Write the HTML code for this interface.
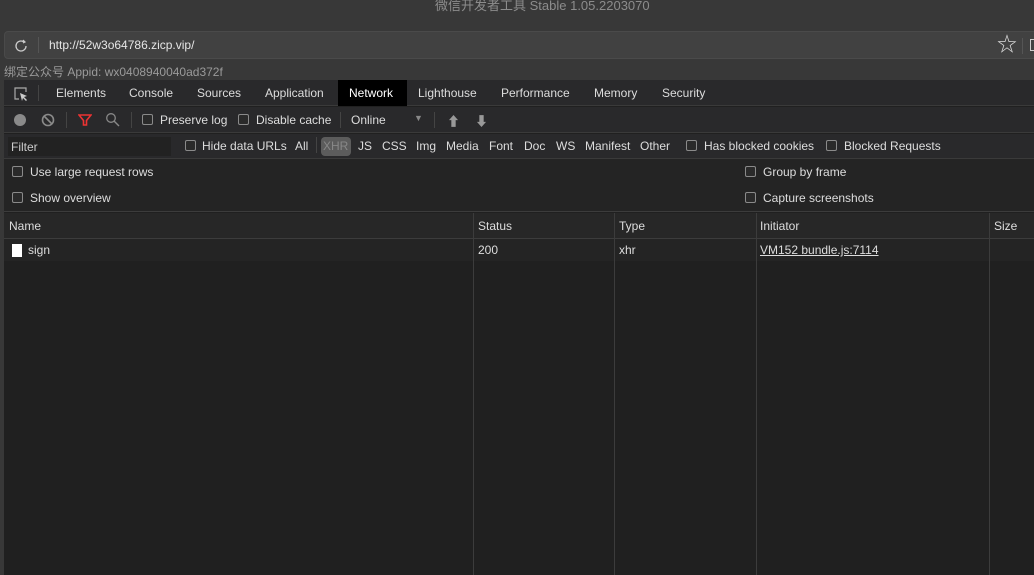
<!DOCTYPE html><html><head><meta charset="utf-8"><style>
*{margin:0;padding:0;box-sizing:border-box}
body{width:1034px;height:575px;overflow:hidden;background:#383838;font-family:"Liberation Sans","Noto Sans CJK SC",sans-serif;font-size:12px;color:#ddd;position:relative}
.a{position:absolute;white-space:nowrap}
.cb{position:absolute;width:11px;height:11px;border:1px solid #8a8a8a;border-radius:2px;background:#2a2a2a}
.vl{position:absolute;width:1px;background:#3c3c3c}
</style></head><body>
<div class="a" style="left:435px;top:-5px;font-size:13px;color:#8c8c8c">微信开发者工具 Stable 1.05.2203070</div>
<div class="a" style="left:4px;top:31px;width:1040px;height:28px;background:#414141;border:1px solid #4a4a4a;border-radius:4px"></div>
<svg class="a" style="left:13px;top:38px" width="16" height="16" viewBox="0 0 16 16"><path d="M13 8a5 5 0 1 1-2-4" fill="none" stroke="#ccc" stroke-width="1.3"/><path d="M10 2l2 2-2 1" fill="none" stroke="#ccc" stroke-width="1.2"/></svg>
<div class="a" style="left:38px;top:37px;width:1px;height:16px;background:#555"></div>
<div class="a" style="left:49px;top:38px;color:#e6e6e6">http://52w3o64786.zicp.vip/</div>
<div class="a" style="left:997px;top:35px;font-size:20px;color:#ddd;line-height:20px">☆</div>
<div class="a" style="left:1022px;top:38px;width:1px;height:16px;background:#555"></div>
<div class="a" style="left:1030px;top:39px;width:8px;height:12px;border:1px solid #ccc"></div>
<div class="a" style="left:4px;top:63px;font-size:12px;color:#9a9a9a">绑定公众号 Appid: wx0408940040ad372f</div>
<div class="a" style="left:4px;top:80px;width:1030px;height:495px;background:#202020"></div>
<div class="a" style="left:4px;top:80px;width:1030px;height:26px;background:#29292b;border-bottom:1px solid #3a3a3a"></div>
<svg class="a" style="left:13px;top:86px" width="16" height="16" viewBox="0 0 16 16"><path d="M6 13H2V2h11v4" fill="none" stroke="#aaa" stroke-width="1.2"/><path d="M7 7l7 3-3 1 3 3-1 1-3-3-1 3z" fill="#ccc"/></svg>
<div class="a" style="left:38px;top:85px;width:1px;height:16px;background:#444"></div>
<div class="a" style="left:338px;top:80px;width:69px;height:26px;background:#000"></div>
<div class="a" style="left:56px;top:86px">Elements</div><div class="a" style="left:129px;top:86px">Console</div><div class="a" style="left:197px;top:86px">Sources</div><div class="a" style="left:265px;top:86px">Application</div><div class="a" style="left:349px;top:86px;color:#fff">Network</div><div class="a" style="left:418px;top:86px">Lighthouse</div><div class="a" style="left:501px;top:86px">Performance</div><div class="a" style="left:594px;top:86px">Memory</div><div class="a" style="left:662px;top:86px">Security</div>
<div class="a" style="left:4px;top:107px;width:1030px;height:26px;background:#29292b;border-bottom:1px solid #3a3a3a"></div>
<div class="a" style="left:14px;top:114px;width:12px;height:12px;border-radius:50%;background:#8a8a8a"></div>
<svg class="a" style="left:41px;top:113px" width="14" height="14"><circle cx="7" cy="7" r="5.5" fill="none" stroke="#8a8a8a" stroke-width="1.6"/><path d="M3 3l8 8" stroke="#8a8a8a" stroke-width="1.6"/></svg>
<div class="a" style="left:66px;top:112px;width:1px;height:16px;background:#444"></div>
<svg class="a" style="left:78px;top:113px" width="14" height="14"><path d="M1 2h12L8.5 7.5V12h-3V7.5z" fill="none" stroke="#e33" stroke-width="1.6"/></svg>
<svg class="a" style="left:105px;top:112px" width="15" height="15"><circle cx="6" cy="6" r="4.3" fill="none" stroke="#888" stroke-width="1.3"/><path d="M9 9l5 5" stroke="#888" stroke-width="1.4"/></svg>
<div class="a" style="left:131px;top:112px;width:1px;height:16px;background:#444"></div>
<div class="cb" style="left:142px;top:114px"></div><div class="a" style="left:160px;top:113px">Preserve log</div>
<div class="cb" style="left:238px;top:114px"></div><div class="a" style="left:256px;top:113px">Disable cache</div>
<div class="a" style="left:340px;top:112px;width:1px;height:16px;background:#444"></div>
<div class="a" style="left:351px;top:113px">Online</div><div class="a" style="left:414px;top:113px;font-size:9px;color:#888">▼</div>
<div class="a" style="left:434px;top:112px;width:1px;height:16px;background:#444"></div>
<div class="a" style="left:447px;top:111px;color:#999;font-size:13px">⬆</div><div class="a" style="left:475px;top:111px;color:#999;font-size:13px">⬇</div>
<div class="a" style="left:4px;top:134px;width:1030px;height:25px;background:#29292b;border-bottom:1px solid #3a3a3a"></div>
<div class="a" style="left:8px;top:137px;width:163px;height:19px;background:#222"></div>
<div class="a" style="left:11px;top:140px;color:#ccc">Filter</div>
<div class="cb" style="left:185px;top:140px"></div><div class="a" style="left:202px;top:139px">Hide data URLs</div>
<div class="a" style="left:295px;top:139px">All</div>
<div class="a" style="left:316px;top:137px;width:1px;height:16px;background:#444"></div>
<div class="a" style="left:321px;top:137px;width:30px;height:19px;border-radius:4px;background:#5c5c5c"></div>
<div class="a" style="left:323px;top:139px;color:#888">XHR</div>
<div class="a" style="left:358px;top:139px">JS</div><div class="a" style="left:382px;top:139px">CSS</div><div class="a" style="left:416px;top:139px">Img</div><div class="a" style="left:446px;top:139px">Media</div><div class="a" style="left:489px;top:139px">Font</div><div class="a" style="left:524px;top:139px">Doc</div><div class="a" style="left:556px;top:139px">WS</div><div class="a" style="left:585px;top:139px">Manifest</div><div class="a" style="left:640px;top:139px">Other</div>
<div class="cb" style="left:686px;top:140px"></div><div class="a" style="left:704px;top:139px">Has blocked cookies</div>
<div class="cb" style="left:826px;top:140px"></div><div class="a" style="left:844px;top:139px">Blocked Requests</div>
<div class="a" style="left:4px;top:159px;width:1030px;height:53px;background:#242424;border-bottom:1px solid #3c3c3c"></div>
<div class="cb" style="left:12px;top:166px"></div><div class="a" style="left:30px;top:165px">Use large request rows</div>
<div class="cb" style="left:12px;top:192px"></div><div class="a" style="left:30px;top:191px">Show overview</div>
<div class="cb" style="left:745px;top:166px"></div><div class="a" style="left:763px;top:165px">Group by frame</div>
<div class="cb" style="left:745px;top:192px"></div><div class="a" style="left:763px;top:191px">Capture screenshots</div>
<div class="a" style="left:4px;top:213px;width:1030px;height:26px;background:#272727;border-bottom:1px solid #3c3c3c"></div>
<div class="a" style="left:4px;top:239px;width:1030px;height:22px;background:#242424"></div>
<div class="vl" style="left:473px;top:213px;height:362px"></div><div class="vl" style="left:614px;top:213px;height:362px"></div><div class="vl" style="left:756px;top:213px;height:362px"></div><div class="vl" style="left:989px;top:213px;height:362px"></div>
<div class="a" style="left:9px;top:219px">Name</div><div class="a" style="left:478px;top:219px">Status</div><div class="a" style="left:619px;top:219px">Type</div><div class="a" style="left:760px;top:219px">Initiator</div><div class="a" style="left:994px;top:219px">Size</div>
<div class="a" style="left:12px;top:244px;width:10px;height:13px;background:#fff"></div>
<div class="a" style="left:28px;top:243px">sign</div><div class="a" style="left:478px;top:243px">200</div><div class="a" style="left:619px;top:243px">xhr</div><div class="a" style="left:760px;top:243px;text-decoration:underline">VM152 bundle.js:7114</div>
</body></html>
